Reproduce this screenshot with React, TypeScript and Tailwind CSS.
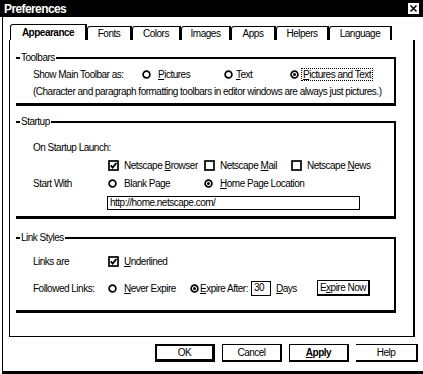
import React from 'react';

function Radio({ on }: { on?: boolean }) {
  return (
    <svg width="9" height="9" viewBox="0 0 9 9" className="shrink-0">
      <circle cx="4.5" cy="4.5" r="3.4" fill="white" stroke="black" strokeWidth="1.7" />
      {on && <circle cx="4.5" cy="4.5" r="1.5" fill="black" />}
    </svg>
  );
}

function Check({ on }: { on?: boolean }) {
  return (
    <svg width="11" height="11" viewBox="0 0 11 11" className="shrink-0">
      <rect x="1" y="1" width="9" height="9" fill="white" stroke="black" strokeWidth="1.7" />
      {on && <path d="M2.8 5.4 L4.7 7.6 L8.4 3" fill="none" stroke="black" strokeWidth="1.9" />}
    </svg>
  );
}

function Option({
  icon,
  children,
  width,
}: {
  icon: React.ReactNode;
  children: React.ReactNode;
  width?: string;
}) {
  return (
    <div className={`flex items-center ${width ?? ''}`}>
      <div className="w-[16px] shrink-0 flex items-center">{icon}</div>
      <span className="whitespace-nowrap">{children}</span>
    </div>
  );
}

function Group({ title, children, className }: { title: string; children: React.ReactNode; className?: string }) {
  return (
    <div className={`relative ml-[6px] w-[380px] border-t-2 border-r-2 border-b-[3px] border-black pl-[17px] ${className ?? ''}`}>
      {/* legend sits over the top rule */}
      <span className="absolute -top-[7px] left-[4px] bg-white px-[1px] leading-[12px]">{title}</span>
      {children}
    </div>
  );
}

const tabs = [
  { label: 'Appearance', w: 'w-[77px]', active: true },
  { label: 'Fonts', w: 'w-[45px]' },
  { label: 'Colors', w: 'w-[49px]' },
  { label: 'Images', w: 'w-[50px]' },
  { label: 'Apps', w: 'w-[45px]' },
  { label: 'Helpers', w: 'w-[53px]' },
  { label: 'Language', w: 'w-[63px]' },
];

export default function App() {
  return (
    <div className="w-[423px] h-[374px] bg-white flex flex-col overflow-hidden font-['Liberation_Sans',Arial,sans-serif] text-[10px] tracking-[-0.5px] text-black">
      {/* title bar */}
      <div className="h-[17px] shrink-0 bg-black flex items-center justify-between pl-[4px] pr-[4px]">
        <span className="text-white font-bold text-[12px] tracking-[-0.6px] leading-none">Preferences</span>
        <div className="w-[11px] h-[11px] bg-white flex items-center justify-center">
          <svg width="9" height="9" viewBox="0 0 9 9">
            <path d="M1.5 1.5 L7.5 7.5 M7.5 1.5 L1.5 7.5" stroke="black" strokeWidth="1.6" />
          </svg>
        </div>
      </div>

      <div className="ml-[2px] flex-1 flex flex-col border-l border-b-[3px] border-black">
        {/* tabs */}
        <div className="mt-[7px] ml-[7px] h-[16px] flex items-end">
          {tabs.map((t) => (
            <div
              key={t.label}
              className={`${t.w} ${t.active ? 'h-[16px] font-bold' : 'h-[14px]'} flex items-center justify-center border-l border-t border-r-2 border-black rounded-tl-[3px] leading-none`}
            >
              {t.label}
            </div>
          ))}
        </div>

        {/* panel */}
        <div className="ml-[6px] w-[406px] h-[297px] border-l border-b border-r-2 border-black flex flex-col">
          <Group title="Toolbars" className="mt-[17px] pt-[7px] pb-[3px]">
            <div className="h-[17px] flex items-center">
              <span className="w-[109px]">Show Main Toolbar as:</span>
              <Option icon={<Radio />} width="w-[82px]">
                <u>P</u>ictures
              </Option>
              <div className="flex items-center w-[66px]">
                <div className="w-[12px] flex items-center">
                  <Radio />
                </div>
                <span>
                  <u>T</u>ext
                </span>
              </div>
              <div className="flex items-center">
                <div className="w-[11px] flex items-center">
                  <Radio on />
                </div>
                <span className="border border-dotted border-black px-[1px] leading-[11px]">
                  <u>P</u>ictures and Text
                </span>
              </div>
            </div>
            <div className="h-[17px] flex items-center whitespace-nowrap">
              (Character and paragraph formatting toolbars in editor windows are always just pictures.)
            </div>
          </Group>

          <Group title="Startup" className="mt-[15px] pt-[15px] pb-[6px]">
            <div className="h-[18px] flex items-center">On Startup Launch:</div>
            <div className="h-[18px] flex items-center">
              <span className="w-[75px]" />
              <Option icon={<Check on />} width="w-[96px]">
                Netscape <u>B</u>rowser
              </Option>
              <Option icon={<Check />} width="w-[87px]">
                Netscape <u>M</u>ail
              </Option>
              <Option icon={<Check />}>
                Netscape <u>N</u>ews
              </Option>
            </div>
            <div className="h-[18px] flex items-center">
              <span className="w-[75px]">Start With</span>
              <Option icon={<Radio />} width="w-[96px]">
                Blank Page
              </Option>
              <Option icon={<Radio on />}>
                <u>H</u>ome Page Location
              </Option>
            </div>
            <div className="mt-[4px] ml-[74px] w-[253px] h-[14px] border border-black flex items-center pl-[2px] leading-none">
              http://home.netscape.com/
            </div>
          </Group>

          <Group title="Link Styles" className="mt-[18px] pt-[13px] pb-[11px]">
            <div className="h-[18px] flex items-center">
              <span className="w-[75px]">Links are</span>
              <Option icon={<Check on />}>
                <u>U</u>nderlined
              </Option>
            </div>
            <div className="mt-[7px] h-[22px] flex items-center">
              <span className="w-[75px]">Followed Links:</span>
              <Option icon={<Radio />} width="w-[82px]">
                <u>N</u>ever Expire
              </Option>
              <div className="flex items-center">
                <div className="w-[10px] flex items-center">
                  <Radio on />
                </div>
                <span className="whitespace-nowrap">
                  <u>E</u>xpire After:
                </span>
              </div>
              <div className="ml-[3px] w-[20px] h-[15px] border border-black flex items-center pl-[2px] leading-none">
                30
              </div>
              <span className="ml-[5px] w-[41px]">
                <u>D</u>ays
              </span>
              <button className="w-[53px] h-[16px] border-l border-t border-r-2 border-b-2 border-black flex items-center justify-center leading-none">
                E<u>x</u>pire Now
              </button>
            </div>
          </Group>
        </div>

        {/* dialog buttons */}
        <div className="mt-[7px] h-[18px] flex justify-end gap-[7px] pr-[5px]">
          <button className="w-[60px] h-[18px] border-2 border-r-[3px] border-b-[3px] border-black leading-none">OK</button>
          <button className="w-[60px] h-[18px] border-l border-t border-r-2 border-b-2 border-black leading-none">Cancel</button>
          <button className="w-[60px] h-[18px] border-l border-t border-r-2 border-b-2 border-black leading-none font-bold">
            <u>A</u>pply
          </button>
          <button className="w-[62px] h-[18px] border-t border-r-2 border-b-2 border-black leading-none">Help</button>
        </div>
      </div>
    </div>
  );
}
